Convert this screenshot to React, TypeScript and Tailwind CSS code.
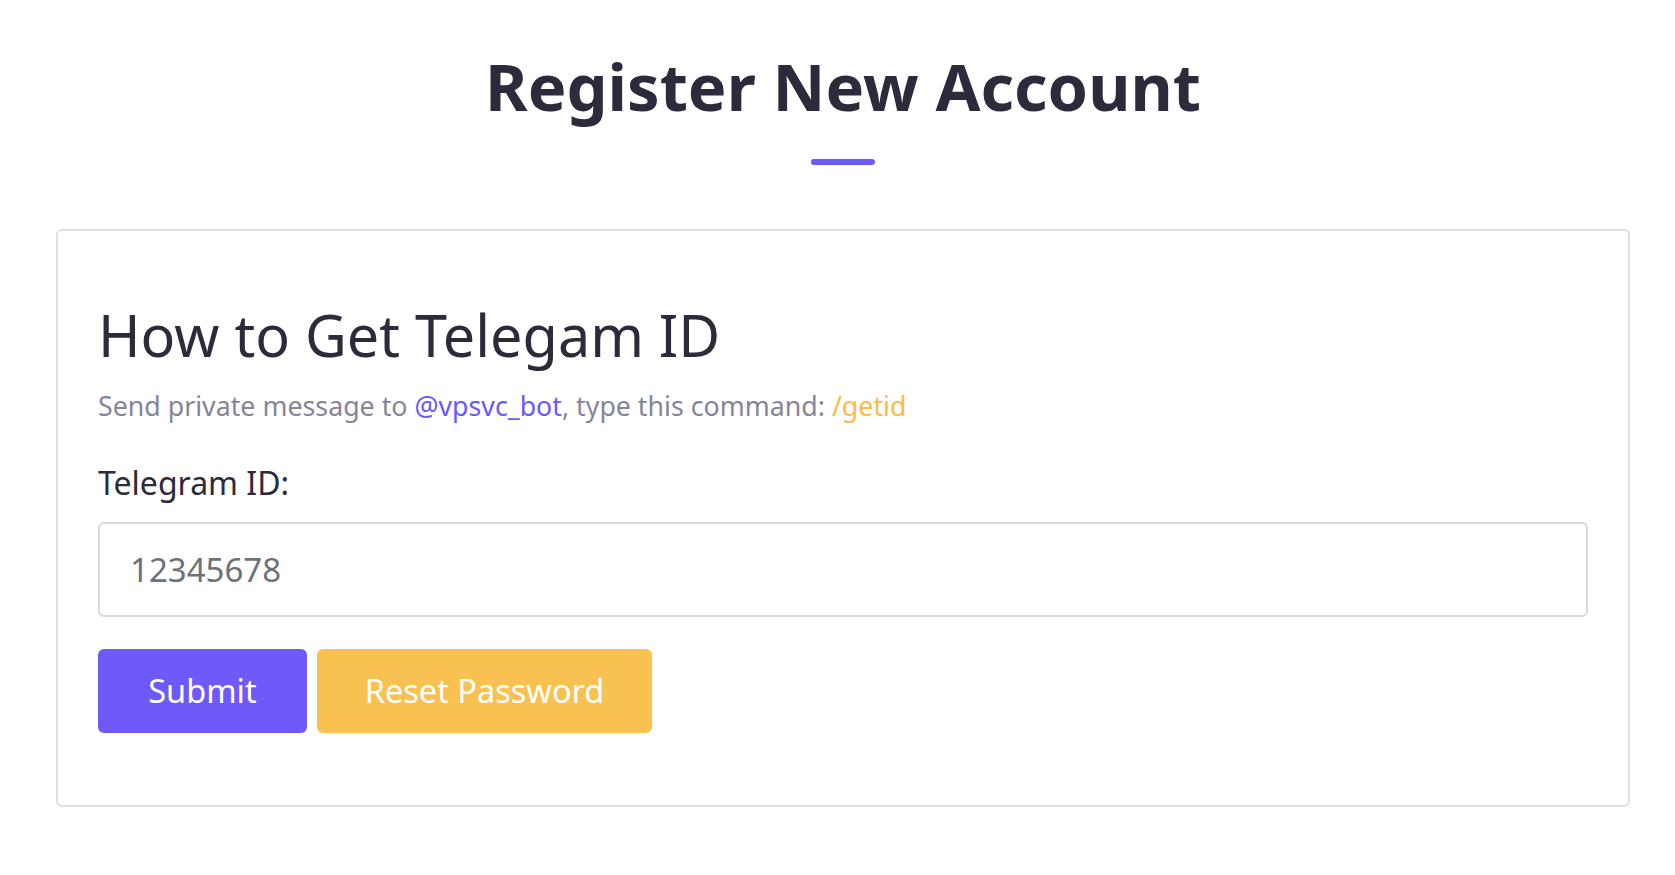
export default function App() {
  return (
    <div className="min-h-screen bg-white pl-[56px] pr-[45px] pt-[54px] font-['Noto_Sans',sans-serif] text-[#2c2a3b]">
      <h1 className="text-center text-[65px] font-bold leading-none">Register New Account</h1>
      <div className="mx-auto mt-[40px] h-[6px] w-[64px] rounded-full bg-[#6c5af8]" />

      <div className="mt-[64px] rounded-[6px] border-2 border-[#dedede] px-[40px] pt-[76px] pb-[72px]">
        <h2 className="text-[57.5px] font-normal leading-none">How to Get Telegam ID</h2>
        <p className="mt-[28px] text-[26.75px] leading-none text-[#86849b]">
          Send private message to <span className="text-[#6b57ff]">@vpsvc_bot</span>, type this command:{' '}
          <span className="text-[#fbbc43]">/getid</span>
        </p>

        <label className="mt-[48px] block text-[32px] leading-none">Telegram ID:</label>
        <input
          type="text"
          placeholder="12345678"
          className="mt-[23px] block h-[95px] w-full rounded-[6px] border-2 border-[#d6d9dc] px-[30px] text-[33px] text-[#4a4f57] placeholder:text-[#6c717a] outline-none"
        />

        <div className="mt-[32px] flex gap-[10px]">
          <button className="h-[84px] w-[209px] rounded-[6px] bg-[#6f5af9] text-[32.5px] text-white">Submit</button>
          <button className="h-[84px] w-[335px] rounded-[6px] bg-[#f9c250] text-[32.5px] text-white">Reset Password</button>
        </div>
      </div>
    </div>
  );
}
